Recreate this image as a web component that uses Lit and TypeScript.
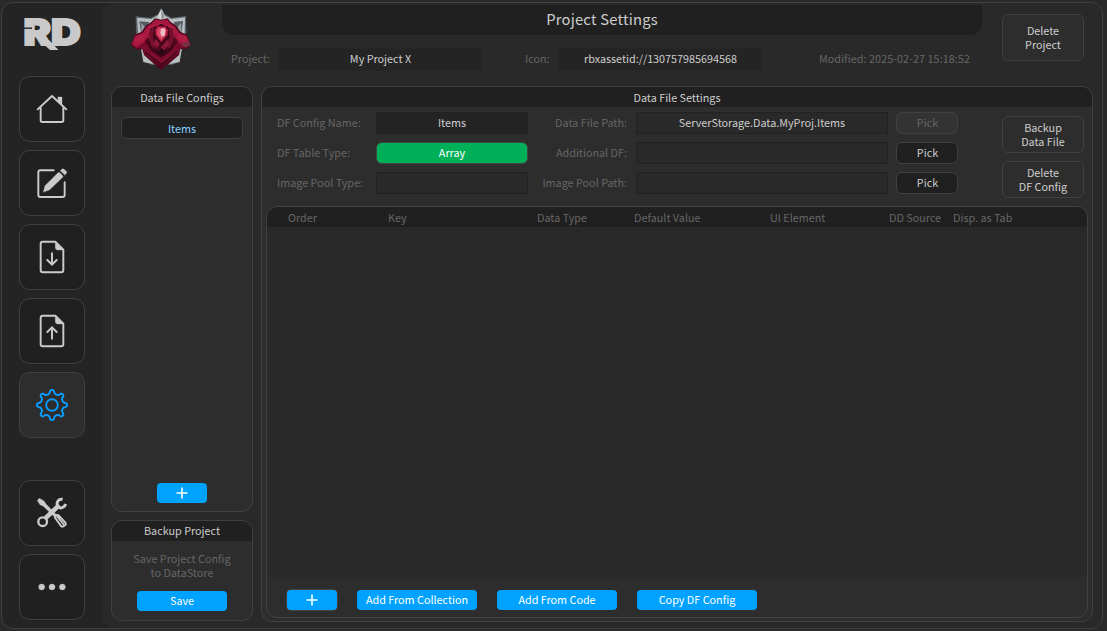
import { LitElement, html, css, svg } from "lit";
import { customElement, property } from "lit/decorators.js";

// Closed wavy outline with eight rounded teeth around (99, 99).
const gearOutline = (() => {
  const pts: string[] = [];
  for (let i = 0; i < 160; i++) {
    const t = (i / 160) * Math.PI * 2;
    const c = Math.cos(8 * t);
    const r = 39.6 + 6.2 * Math.tanh(1.7 * c);
    const a = t - (0.035 * Math.sin(8 * t));
    pts.push(`${(99 + r * Math.sin(a)).toFixed(1)} ${(99 - r * Math.cos(a)).toFixed(1)}`);
  }
  return `M${pts.join("L")}Z`;
})();

const page = svg`<path d="M109 53H71Q65 53 65 59V139Q65 145 71 145H127Q133 145 133 139V77Z"/><path class="solid" d="M109 53V71Q109 78 116 78H133Z"/>`;

const glyphs: Record<string, unknown> = {
  home: svg`<path d="M56 100L99 60L142 100M65 94V133Q65 138 70 138H128Q133 138 133 133V94"/><path class="solid" d="M117 63H129V87L117 77Z"/>`,
  edit: svg`<path d="M104 61H64Q58 61 58 67V135Q58 141 64 141H131Q137 141 137 135V97"/><path class="solid" d="M73 126L78 107L117 68Q120 66 123 69L131 77Q133 80 131 82L92 119ZM124 62L129 57Q132 55 135 58L142 64Q145 67 142 70L138 75Z"/>`,
  download: svg`${page}<path d="M99 88V122M85 108L99 122L113 108"/>`,
  upload: svg`${page}<path d="M99 122V88M85 102L99 88L113 102"/>`,
  gear: svg`<path d=${gearOutline}/><circle cx="99" cy="99" r="17.5"/>`,
  tools: svg`<path class="solid" d="M55 61L61 55L75 63L81 72L112 104L106 110L73 79L63 74Z"/>
    <path class="thick" d="M82 112L116 80"/>
    <circle class="ring" cx="71" cy="125" r="13"/>
    <path class="jaw" d="M131 58C119 56 111 66 116 79C124 88 137 83 140 72"/>
    <path d="M108 113Q107 110 109 108L114 105Q117 104 119 106L139 128Q142 132 139 135L133 139Q129 141 126 138ZM115 110L133 132"/>`,
  more: svg`<circle class="solid" cx="68" cy="99" r="9"/><circle class="solid" cx="99" cy="99" r="9"/><circle class="solid" cx="130" cy="99" r="9"/>`,
};

@customElement("nav-tile")
class NavTile extends LitElement {
  @property() name = "home";
  @property({ type: Boolean, reflect: true }) active = false;

  static styles = css`
    :host { display: block; box-sizing: border-box; width: 66px; height: 66px; border: 1px solid #404040; border-radius: 11px; background: #202020; color: #cbcbcb; }
    :host([active]) { background: #2d2d2d; color: #0a9cff; }
    svg { display: block; width: 66px; height: 66px; margin: -1px; fill: none; stroke: currentColor; stroke-width: 5.8; stroke-linecap: round; stroke-linejoin: round; }
    .solid { fill: currentColor; stroke-width: 1; }
    .thick { stroke-width: 14; }
    .ring { stroke-width: 7; }
    .jaw { stroke-width: 9; stroke-linecap: butt; }
  `;

  render() {
    return html`<svg viewBox="0 0 198 198">${glyphs[this.name]}</svg>`;
  }
}

@customElement("gem-badge")
class GemBadge extends LitElement {
  static styles = css`
    :host { display: block; width: 72px; height: 66px; }
    svg { display: block; width: 72px; height: 66px; }
  `;

  render() {
    return html`<svg viewBox="0 0 216 198">
      <path d="M109 9L120 28L140 38L183 33L184 82L168 124L161 171L139 180H82L58 171L50 126L33 87L32 34L77 38L98 28Z" fill="#596066"/>
      <path d="M109 12L119 31L138 42L180 37L179 82L164 171L140 176H80L55 171L39 82L36 38L79 42L99 31Z" fill="#b7bcbf"/>
      <path d="M43 49L72 51L65 78L48 82ZM174 48L146 51L155 78L170 81Z" fill="#555d63"/>
      <path d="M49 54L68 75L49 80ZM168 53L151 75L169 80Z" fill="#979da1"/>
      <path d="M109 13L99 33L109 47L119 33Z" fill="#d9dddd"/>
      <path d="M109 14V47L119 33Z" fill="#8d9599"/>
      <path d="M109 44L90 40L80 50L62 62L50 80L28 90L18 121L34 134L52 133L57 150L84 174L109 195L134 174L162 150L166 132L185 132L198 120L187 90L166 80L154 62L136 50L128 40Z" fill="#4f071d"/>
      <path d="M109 47L92 43L82 54L66 65L54 83L30 93L20 118L36 130L58 112L69 94L77 70L109 56L141 70L149 94L160 112L182 128L196 118L185 93L162 83L150 65L134 54L126 43Z" fill="#a81740"/>
      <path d="M34 97L60 87L54 106L27 119ZM182 96L157 87L164 106L189 118Z" fill="#b01f43"/>
      <path d="M31 130L61 111L76 134L108 158L141 134L157 111L185 129L164 130L159 147L109 187L59 147L53 130Z" fill="#7b0b2c"/>
      <path d="M55 131L79 148L109 169L139 148L161 131L158 143L109 183L60 144Z" fill="#8a1435"/>
      <path d="M59 135L80 152L109 174L137 152L157 135L155 145L109 186L62 145Z" fill="#4c071b"/>
      <path d="M74 72L109 56L144 72L149 102L139 137L109 157L79 137L68 102Z" fill="#3c0618"/>
      <path d="M76 74L89 66L84 91L91 134L80 125L70 101ZM142 73L130 65L134 95L127 134L139 123L147 100Z" fill="#74102d"/>
      <path d="M74 70L109 55L144 70L148 100M74 70L69 101" fill="none" stroke="#bd234a" stroke-width="2.5"/>
      <path d="M109 64L97 64L90 75L92 91L109 112L127 91L129 75L121 64Z" fill="#b81d45"/>
      <path d="M108 69L101 68L96 76L97 89L109 105L121 88L122 75L118 68Z" fill="#dc4a68"/>
      <path d="M108 71L119 69L122 77L119 92L110 95L106 84Z" fill="#efbcc6"/>
      <path d="M92 105L110 121L126 102L132 113L119 132L107 147L86 125Z" fill="#4f0a20"/>
      <path d="M92 101L104 115L96 129L84 119ZM131 101L118 115L103 134L109 145L132 120Z" fill="#8a1735"/>
      <path d="M109 128L98 142L109 150L120 139Z" fill="#270711"/>
      <path d="M168 119L190 108L197 121L181 127Z" fill="#743345"/>
    </svg>`;
  }
}

@customElement("app-root")
class AppRoot extends LitElement {
  static styles = css`
    :host { display: block; box-sizing: border-box; width: 1107px; height: 631px; padding: 2px 4px 2px 1px; overflow: hidden; background: #2a2a2a; color: #cdcdcd; font: 10.8px/14px "Noto Sans CJK SC", "Noto Sans CJK JP", sans-serif; white-space: nowrap; }
    * { box-sizing: border-box; }
    .frame { display: flex; height: 627px; border: 1px solid #414141; border-radius: 12px; background: #242424; overflow: hidden; }
    .side { width: 100px; padding: 0 17px; display: flex; flex-direction: column; gap: 8px; flex: none; }
    .logo { width: 66px; height: 65px; display: block; }
    .logo text { font: 900 35px "Inter", sans-serif; fill: #c9c9c9; stroke: #c9c9c9; stroke-width: 1.8; }
    .logo .leg { fill: #c9c9c9; }
    .logo .slit { fill: #242424; }
    .gap { height: 26px; }
    .main { flex: 1; background: #292929; border-radius: 12px 0 0 12px; padding: 2px 9px 0 9px; display: flex; flex-direction: column; }
    .top { display: flex; height: 81px; }
    .gemcell { width: 111px; padding-left: 14px; }
    .head { width: 760px; }
    .title { height: 30px; background: #202020; border-radius: 0 0 12px 12px; text-align: center; font-size: 14.8px; line-height: 28px; letter-spacing: 0.2px; }
    .meta { display: flex; align-items: center; height: 24px; margin-top: 12px; padding-left: 9px; padding-right: 12px; }
    .meta .lab { width: 47px; }
    .meta > span { margin-top: -2px; }
    .dim { color: #666; }
    .field { border: 1px solid #222; background: #292929; height: 22px; text-align: center; line-height: 19px; }
    .meta .field { width: 204px; background: #242424; border-color: #262626; height: 23px; line-height: 19px; padding-left: 1px; }
    .meta .iconlab { margin-left: 43px; width: 33px; }
    .meta .modified { margin-left: auto; letter-spacing: 0.06px; }
    .btn { border: 1px solid #404040; border-radius: 6px; background: #2d2d2d; width: 82px; text-align: center; display: flex; flex-direction: column; justify-content: center; padding-bottom: 1px; }
    .delproj { height: 47px; margin: 9px 0 0 20px; }
    .cols { display: grid; grid-template-columns: 142px 832px; gap: 8px; height: 536px; }
    .left { display: flex; flex-direction: column; gap: 8px; }
    .panel { border: 1px solid #414141; border-radius: 11px; background: #2d2d2d; overflow: hidden; display: flex; flex-direction: column; }
    .bar { height: 20px; line-height: 21px; background: #202020; text-align: center; flex: none; }
    .configs { height: 426px; align-items: stretch; }
    .item { margin: 10px 9px 0; height: 22px; border: 1px solid #404040; border-radius: 6px; background: #202020; color: #82cfff; text-align: center; line-height: 21px; }
    .blue { background: #00a2ff; color: #fff; border-radius: 4px; height: 20px; line-height: 19px; text-align: center; width: 120px; }
    .plus { display: flex; align-items: center; justify-content: center; width: 50px; }
    .plus svg { width: 12px; height: 12px; stroke: #fff; stroke-width: 1.6; display: block; }
    .configs .plus { margin: auto auto 8px; }
    .foot .plus { box-shadow: 0 0 0 1px #424242; }
    .backup { height: 101px; text-align: center; }
    .backup p { margin: 10px 0 12px; line-height: 14px; }
    .backup .bar { line-height: 19px; }
    .save { width: 90px; margin: 0 auto; }
    .form { display: flex; height: 99px; padding-left: 15px; flex: none; }
    .rows { width: 681px; padding-top: 5px; display: flex; flex-direction: column; gap: 8px; }
    .row { display: grid; grid-template-columns: 99px 152px 99px 9px 252px 8px 62px; align-items: center; height: 22px; }
    .row > span { margin-top: -2px; }
    .row .r { text-align: right; }
    .filled { background: #242424; }
    .green { background: #00b058; color: #fff; border: 1px solid #424842; border-radius: 6px; height: 22px; line-height: 19px; text-align: center; }
    .pick { height: 22px; border: 1px solid #404040; border-radius: 6px; background: #202020; text-align: center; line-height: 19px; padding-left: 1px; }
    .off { background: #333; color: #666; }
    .acts { padding: 9px 0 0 44px; display: flex; flex-direction: column; gap: 8px; }
    .acts .btn { height: 37px; }
    .table { margin: 0 4px; height: 412px; }
    .thead { display: grid; grid-template-columns: 100px 149px 97px 136px 119px 64px 1fr; padding-left: 21px; text-align: left; }
    .body { height: 350px; background: #292929; }
    .foot { display: flex; gap: 20px; align-items: center; padding: 13px 0 0 20px; }
  `;

  render() {
    const plus = html`<svg viewBox="0 0 12 12"><path d="M6 .5V11.5M.5 6H11.5"/></svg>`;
    return html`<div class="frame">
      <nav class="side">
        <svg class="logo" viewBox="0 -13 66 65">
          <text x="4.5" y="28.5" textLength="57.5" lengthAdjust="spacingAndGlyphs">RD</text>
          <polygon class="leg" points="20,24 30,24 39.5,34 31,34"/>
          <rect class="slit" x="3" y="11.5" width="10" height="1.4"/>
        </svg>
        <nav-tile name="home"></nav-tile>
        <nav-tile name="edit"></nav-tile>
        <nav-tile name="download"></nav-tile>
        <nav-tile name="upload"></nav-tile>
        <nav-tile name="gear" active></nav-tile>
        <div class="gap"></div>
        <nav-tile name="tools"></nav-tile>
        <nav-tile name="more"></nav-tile>
      </nav>
      <main class="main">
        <header class="top">
          <div class="gemcell"><gem-badge></gem-badge></div>
          <div class="head">
            <div class="title">Project Settings</div>
            <div class="meta">
              <span class="lab dim">Project:</span><div class="field">My Project X</div>
              <span class="iconlab dim">Icon:</span><div class="field">rbxassetid://130757985694568</div>
              <span class="modified dim">Modified: 2025-02-27 15:18:52</span>
            </div>
          </div>
          <div class="btn delproj"><span>Delete</span><span>Project</span></div>
        </header>
        <div class="cols">
          <div class="left">
            <section class="panel configs">
              <div class="bar">Data File Configs</div>
              <div class="item">Items</div>
              <div class="blue plus">${plus}</div>
            </section>
            <section class="panel backup">
              <div class="bar">Backup Project</div>
              <p class="dim">Save Project Config<br>to DataStore</p>
              <div class="blue save">Save</div>
            </section>
          </div>
          <section class="panel">
            <div class="bar">Data File Settings</div>
            <div class="form">
              <div class="rows">
                <div class="row"><span class="dim">DF Config Name:</span><div class="field filled">Items</div><span class="dim r">Data File Path:</span><i></i><div class="field">ServerStorage.Data.MyProj.Items</div><i></i><div class="pick off">Pick</div></div>
                <div class="row"><span class="dim">DF Table Type:</span><div class="green">Array</div><span class="dim r">Additional DF:</span><i></i><div class="field"></div><i></i><div class="pick">Pick</div></div>
                <div class="row"><span class="dim">Image Pool Type:</span><div class="field"></div><span class="dim r">Image Pool Path:</span><i></i><div class="field"></div><i></i><div class="pick">Pick</div></div>
              </div>
              <div class="acts">
                <div class="btn"><span>Backup</span><span>Data File</span></div>
                <div class="btn"><span>Delete</span><span>DF Config</span></div>
              </div>
            </div>
            <div class="panel table">
              <div class="bar thead dim"><span>Order</span><span>Key</span><span>Data Type</span><span>Default Value</span><span>UI Element</span><span>DD Source</span><span>Disp. as Tab</span></div>
              <div class="body"></div>
              <div class="foot"><div class="blue plus">${plus}</div><div class="blue">Add From Collection</div><div class="blue">Add From Code</div><div class="blue">Copy DF Config</div></div>
            </div>
          </section>
        </div>
      </main>
    </div>`;
  }
}
